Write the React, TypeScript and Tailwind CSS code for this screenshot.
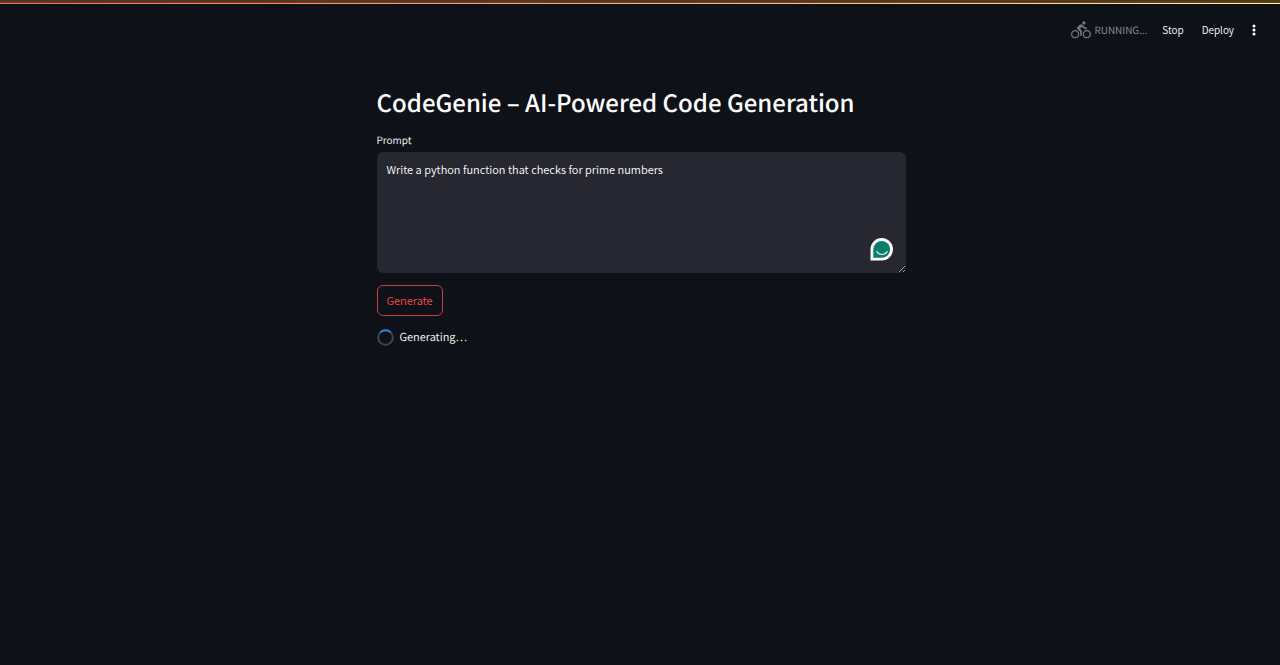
import { useState } from "react";

function BikeIcon() {
  return (
    <svg className="size-5 shrink-0 text-[#74767b]" viewBox="0 0 24 24" fill="currentColor" aria-hidden="true">
      <path d="M15.5 5.5c1.1 0 2-.9 2-2s-.9-2-2-2-2 .9-2 2 .9 2 2 2zM5 12c-2.8 0-5 2.2-5 5s2.2 5 5 5 5-2.2 5-5-2.2-5-5-5zm0 8.5c-1.9 0-3.5-1.6-3.5-3.5s1.6-3.5 3.5-3.5 3.5 1.6 3.5 3.5-1.6 3.5-3.5 3.5zm5.8-10l2.4-2.4.8.8c1.3 1.3 3 2.1 5.1 2.1V9c-1.5 0-2.7-.6-3.6-1.5l-1.9-1.9c-.5-.4-1-.6-1.6-.6s-1.1.2-1.4.6L7.8 8.4c-.4.4-.6.9-.6 1.4 0 .6.2 1.1.6 1.4L11 14v5h2v-6.2l-2.2-2.3zM19 12c-2.8 0-5 2.2-5 5s2.2 5 5 5 5-2.2 5-5-2.2-5-5-5zm0 8.5c-1.9 0-3.5-1.6-3.5-3.5s1.6-3.5 3.5-3.5 3.5 1.6 3.5 3.5-1.6 3.5-3.5 3.5z" />
    </svg>
  );
}

function MenuDots() {
  return (
    <svg className="h-4 w-4" viewBox="0 0 16 16" fill="currentColor" aria-hidden="true">
      <circle cx="8" cy="4" r="1.5" />
      <circle cx="8" cy="8" r="1.5" />
      <circle cx="8" cy="12" r="1.5" />
    </svg>
  );
}

function AssistantBadge() {
  return (
    <svg className="size-6" viewBox="0 0 24 24" aria-hidden="true">
      <path d="M.5 23.5V12a11.25 11.25 0 1 1 11.25 11.5Z" fill="#fff" />
      <path d="M3.3 20.8V12a8.4 8.4 0 1 1 8.4 8.8Z" fill="#0b7d6e" />
      <path d="M6.8 14.5c2.2 4 8.2 4 10.4 0" fill="none" stroke="#d6efeb" strokeWidth="1.2" strokeLinecap="round" />
    </svg>
  );
}

function Spinner() {
  return (
    <svg className="size-[17px]" viewBox="0 0 17 17" fill="none" strokeWidth="2" aria-hidden="true">
      <circle cx="8.5" cy="8.5" r="7.3" stroke="#41454d" />
      <path d="M3.34 3.34A7.3 7.3 0 0 1 13.66 3.34" stroke="#2b7fd0" />
    </svg>
  );
}

export default function App() {
  const [prompt, setPrompt] = useState("Write a python function that checks for prime numbers");

  return (
    <div className="min-h-screen bg-[#0e1117] font-['Noto_Sans_CJK_SC',sans-serif] font-[350] text-white [text-rendering:geometricPrecision]">
      <div className="h-0.5 bg-[#543720]" />
      <div className="h-px bg-linear-to-r from-[#8a2c28] to-[#5a4a20]" />
      <div className="h-px bg-linear-to-r from-[#e0706c] to-[#fff58f]" />
      <header className="flex h-[52px] items-center justify-end pr-[18px] text-[10px] leading-4">
        <div className="flex items-center gap-1 text-[#96989d]">
          <BikeIcon />
          <span>RUNNING...</span>
        </div>
        <button type="button" className="ml-[15px]">Stop</button>
        <button type="button" className="ml-[18px]">Deploy</button>
        <button type="button" aria-label="Main menu" className="ml-3">
          <MenuDots />
        </button>
      </header>

      <main className="mx-auto mt-[26px] w-full max-w-[531px] pl-0.5">
        <h1 className="text-[24px] leading-10 font-medium">CodeGenie – AI-Powered Code Generation</h1>
        <label htmlFor="prompt" className="mt-2 block text-[10px] leading-5">Prompt</label>
        <div className="relative mt-0.5">
          <textarea
            id="prompt"
            value={prompt}
            onChange={(e) => setPrompt(e.target.value)}
            className="block h-[121px] w-full resize-y rounded-md bg-[#262730] px-2.5 py-[7px] text-[11px] leading-5 outline-none"
          />
          <span className="pointer-events-none absolute right-3 bottom-3">
            <AssistantBadge />
          </span>
        </div>
        <button type="button" className="mt-3 block rounded-md border border-[#c43f47] px-[9px] py-1 text-[11px] leading-[21px] text-[#ff4b4b]">
          Generate
        </button>
        <div role="status" className="mt-[11px] flex items-center gap-1.5 text-[11px] leading-5">
          <Spinner />
          <span>Generating…</span>
        </div>
      </main>
    </div>
  );
}
